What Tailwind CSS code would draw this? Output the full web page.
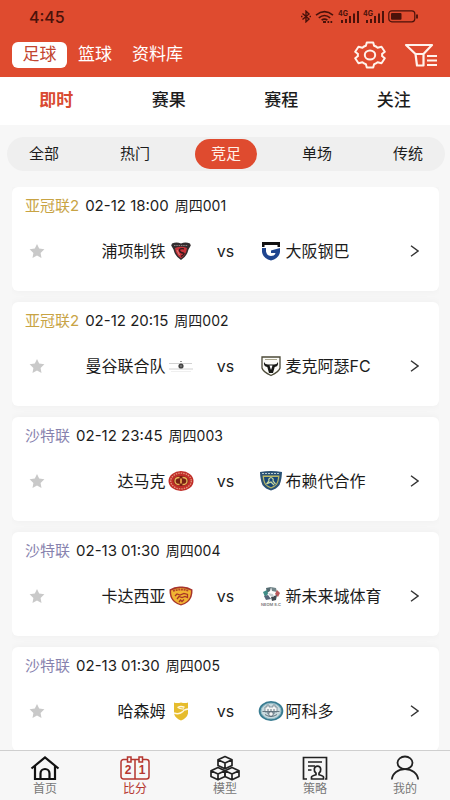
<!DOCTYPE html>
<html lang="zh-CN">
<head>
<meta charset="utf-8">
<meta name="viewport" content="width=device-width, initial-scale=1">
<title>比分</title>
<script src="https://cdn.jsdelivr.net/npm/@tailwindcss/browser@4"></script>
</head>
<body class="flex h-screen flex-col overflow-hidden bg-[#f7f7f7] font-['Inter','Noto_Sans_CJK_SC',sans-serif] text-[#1c1c1c]">

<header class="shrink-0 bg-[#df4b2f]">
  <div class="flex h-[33px] items-center justify-between pr-[31px] pl-[29px] text-[#4a120a]">
    <time class="text-base font-medium">4:45</time>
    <div class="flex items-center gap-1">
      <svg class="h-[13px] w-[10px]" viewBox="0 0 10 13" fill="none" stroke="currentColor" stroke-width="1.4"><path d="M1.5 3.5 8 9 5 11.8V1.2L8 4 1.5 9.5"/><path d="M0 6.5h1.5M8.5 6.5H10"/></svg>
      <svg class="h-[14px] w-[19px]" viewBox="0 0 19 14" fill="none" stroke="currentColor" stroke-width="1.6"><path d="M1 5.2Q9.5-1.8 18 5.2M3.8 7.8q5.7-4.6 11.4 0M6.6 10.2q2.900-2.200 5.800 0"/><path d="M8 12h3M12.5 12h1.7M15.5 12h1.7" stroke-width="2"/></svg>
      <svg class="h-[14px] w-[21px]" viewBox="0 0 21 14" fill="currentColor"><text x="0" y="6" font-size="7" font-weight="700">4G</text><path d="M3 10h2v3H3zM7 9h2v4H7zM11 6h2v7h-2zM15 3.500h2V13h-2zM19 1h2v12h-2z"/></svg>
      <svg class="h-[14px] w-[21px]" viewBox="0 0 21 14" fill="currentColor"><text x="0" y="6" font-size="7" font-weight="700">4G</text><path d="M3 10h2v3H3zM7 9h2v4H7zM11 6h2v7h-2zM15 3.500h2V13h-2zM19 1h2v12h-2z"/></svg>
      <svg class="h-[13px] w-[31px]" viewBox="0 0 31 13"><rect x=".8" y=".8" width="26" height="11" rx="3" fill="none" stroke="currentColor" stroke-width="1.2"/><rect x="3" y="3" width="10.500" height="6.800" rx="1" fill="currentColor"/><path d="M29 4.500v4" stroke="currentColor" stroke-width="1.800"/></svg>
    </div>
  </div>
  <div class="flex h-11 items-center justify-between px-3 text-[17px] text-white">
    <nav class="flex items-center" aria-label="频道">
      <a href="#" aria-current="page" class="flex h-[26px] w-[55px] items-center justify-center rounded-md bg-white text-[#c2452f]">足球</a>
      <a href="#" class="ml-[11px]">篮球</a>
      <a href="#" class="ml-5">资料库</a>
    </nav>
    <div class="flex items-center gap-[18px]">
      <button type="button" aria-label="设置">
        <svg class="h-7 w-8" viewBox="0 0 32 28" fill="none" stroke="#fff3ec" stroke-width="2" stroke-linejoin="round"><path d="M12.800 1.500h6.400l.9 3.300q2 .6 3.500 1.900l3.900-.9 3.300 5-2.800 2.200q.4 1 0 2l2.800 2.200-3.300 5-3.900-.9q-1.500 1.300-3.500 1.900l-.9 3.300h-6.400l-.9-3.300q-2-.6-3.500-1.900l-3.900.9-3.300-5L4 15q-.4-1 0-2L1.200 10.800l3.300-5 3.900.9q1.500-1.300 3.500-1.900z"/><ellipse cx="16" cy="14" rx="5.200" ry="4.600"/></svg>
      </button>
      <button type="button" aria-label="筛选">
        <svg class="h-6 w-[34px]" viewBox="0 0 34 24" fill="none" stroke="#fff3ec" stroke-width="2.200"><path d="M2 2h26L19.500 11v11.500H13L11.500 11z" stroke-linejoin="round"/><path d="M11.500 11h8M23 13h10M23 17.500h10M23 22h10" stroke-width="1.800"/></svg>
      </button>
    </div>
  </div>
</header>

<nav class="grid h-12 shrink-0 grid-cols-4 place-items-center bg-white text-[17px] font-medium" aria-label="赛事">
  <a href="#" aria-current="page" class="font-bold text-[#d94b31]">即时</a>
  <a href="#">赛果</a>
  <a href="#">赛程</a>
  <a href="#">关注</a>
</nav>

<div class="mt-3 mr-[5px] ml-[7px] flex h-[34px] shrink-0 items-center justify-between rounded-full bg-[#efefef] px-1.5 text-[15px]">
  <button type="button" class="h-[30px] w-[62px]">全部</button>
  <button type="button" class="h-[30px] w-[62px]">热门</button>
  <button type="button" aria-pressed="true" class="h-[30px] w-[62px] rounded-full bg-[#df4b2f] text-[#fff0e8]">竞足</button>
  <button type="button" class="h-[30px] w-[62px]">单场</button>
  <button type="button" class="h-[30px] w-[62px]">传统</button>
</div>

<main id="matches" class="mt-4 mr-[11px] ml-3 flex min-h-0 flex-1 flex-col gap-[11px] overflow-y-auto [scrollbar-width:none]"></main>

<nav class="grid h-[50px] shrink-0 grid-cols-5 border-t border-[#cfcfcf] bg-[#f7f7f7] text-xs text-[#777]" aria-label="主导航">
  <a href="#" class="flex flex-col items-center pt-1">
    <svg class="h-[26px] w-[30px]" viewBox="0 0 30 26" fill="none" stroke="#111" stroke-width="2.200"><path d="M1.500 13.500 15 2.500l13.500 11"/><path d="M5 11v13h20V11M10.500 24v-5.500a4.500 4.500 0 0 1 9 0V24"/></svg>
    <span class="leading-4">首页</span>
  </a>
  <a href="#" aria-current="page" class="flex flex-col items-center pt-1 text-[#b5362f]">
    <svg class="h-[26px] w-[30px]" viewBox="0 0 30 26" fill="none" stroke="currentColor" stroke-width="1.500"><path d="M7.500 4.500H3.500A2.500 2.500 0 0 0 1 7v14.500A2.500 2.500 0 0 0 3.500 24h23a2.500 2.500 0 0 0 2.500-2.500V7a2.500 2.500 0 0 0-2.500-2.500h-4M11 4.500h8M15 4.500V24"/><rect x="7.500" y="2" width="3.500" height="5"/><rect x="19" y="2" width="3.500" height="5"/><g fill="currentColor" stroke="none" font-size="12" font-weight="700" text-anchor="middle" font-family="Liberation Sans"><text x="8" y="19">2</text><text x="22" y="19">1</text></g></svg>
    <span class="leading-4">比分</span>
  </a>
  <a href="#" class="flex flex-col items-center pt-1">
    <svg class="h-[26px] w-[30px]" viewBox="0 0 30 26" fill="none" stroke="#222" stroke-width="1.700" stroke-linejoin="round"><path id="cube" d="m15 1.500 7 3.300v5.700L15 13.700l-7-3.200V4.800zM8 4.800l7 3.200 7-3.200M15 8v5.700"/><use href="#cube" x="-7" y="11"/><use href="#cube" x="7" y="11"/></svg>
    <span class="leading-4">模型</span>
  </a>
  <a href="#" class="flex flex-col items-center pt-1">
    <svg class="h-[26px] w-[30px]" viewBox="0 0 30 26" fill="none" stroke="#222" stroke-width="1.700"><path d="M7 24H3.500V2.500h23V24H25M8 7h14M8 11h7M8 15h3.500"/><path d="M11.500 24v-2q0-1 4.500-2.300v-1.500q-2-1.700-1.700-4.200.4-2.800 3.200-2.800t3.200 2.800q.3 2.500-1.700 4.200v1.500q4.500 1.300 4.500 2.300v2z"/></svg>
    <span class="leading-4">策略</span>
  </a>
  <a href="#" class="flex flex-col items-center pt-1">
    <svg class="h-[26px] w-[30px]" viewBox="0 0 30 26" fill="none" stroke="#222" stroke-width="1.800"><ellipse cx="15" cy="7.800" rx="7.500" ry="6.300"/><path d="M1.800 24.500C2.500 18 8 14.200 15 14.200S27.500 18 28.200 24.500"/></svg>
    <span class="leading-4">我的</span>
  </a>
</nav>

<script>
const crest = inner => `<svg class="h-6 w-[26px] shrink-0" viewBox="0 0 26 24" aria-hidden="true">${inner}</svg>`;

const crests = {
  pohang: crest('<path d="M4 4.500q4.500-2 9 0 4.500-2 9 0l.8 2-2.300 4Q19 17.500 13 21 7 17.500 5.500 10.500l-2.300-4z" fill="#332d2f"/><path d="M7 9q6-2.500 12 0-.5 7-6 10.200Q7.500 16 7 9z" fill="#c9333a"/><path d="M16 9.800q-5-.5-4.500 1.700t3.500 2.500-2 3.500" fill="none" stroke="#33191b" stroke-width="1.300"/><path d="M9 11l2.500 5" stroke="#e6a29b" stroke-width=".8"/><path d="M6 6.500h14" stroke="#a49a9a" stroke-width=".8" stroke-dasharray="1.500 .8"/>'),
  gamba: crest('<path d="M4 3h18v5h-2.500V6H6.500v2H4z" fill="#111"/><path d="M4 9h4v3.500q1 4.500 5 4.500t4.500-3H13v-2.500l9-2.500v4q-1 6.500-9 8.500-8-2-9-8.500z" fill="#1f458f"/>'),
  bangkok: crest('<path d="M1 9.500h23M1 15h24" stroke="#d2d2d2"/><path d="M3 17.500h20" stroke="#e8e8e8" stroke-width=".7"/><circle cx="13" cy="12" r="2.600" fill="#444"/><path d="M12 7.500h2M12 12h2" stroke="#999"/>'),
  macarthur: crest('<path d="M4 3h18v11q-1 4-9 7.500Q5 18 4 14z" fill="#fcfcf8" stroke="#4c4a38" stroke-width="1.300"/><path d="M7 5.500h12" stroke="#aaa68e"/><path d="M6 8q1 2.500 4 2.500h6q3 0 4-2.500.7 4.500-3.300 5L15 19h-4l-1.700-6Q5.300 12.500 6 8z" fill="#171815"/><path d="m11.500 11.500 1.500 4.500 1.500-4.500z" fill="#fff"/>'),
  damac: crest('<ellipse cx="13" cy="12" rx="12.500" ry="10" fill="#c02d28"/><ellipse cx="13" cy="12" rx="10.300" ry="7.900" fill="none" stroke="#e3957c" stroke-width="1.300" stroke-dasharray="1.500 1"/><ellipse cx="13" cy="12" rx="7.500" ry="5" fill="#772015"/><path d="M11.500 8.500q-4.500 0-4.500 3.500t4.500 3.500M14.500 8.500q4.500 0 4.500 3.500t-4.500 3.500" fill="none" stroke="#eab45a" stroke-width="1.300"/><path d="M13 9.500v5" stroke="#e5a247" stroke-width="1.800"/>'),
  taawoun: crest('<path d="M2 3q11-2 22 0-.3 8-2.500 13-3 4-8.500 5.500Q7.500 20 4.500 16 2.300 11 2 3z" fill="#2a5275"/><path d="M4.500 6.500h17q-.5 6-2.500 9-2 2.500-6 4-4-1.500-6-4-2-3-2.500-9z" fill="#b9b866"/><path d="M6 8h14q-.5 5.500-2.700 8L13 18.300 8.700 16Q6.500 13.500 6 8z" fill="#174778"/><path d="M4 4.500h18" stroke="#b7cbd0" stroke-dasharray="2 1"/><path d="M13 8.500q3 1 2 3.500l2.500 3M13 8.500q-3 1-2 3.500l-2.500 3 4.500-2 3 3" stroke="#c9d9a0" stroke-width="1.200" fill="none"/>'),
  qadsiah: crest('<path d="M1.500 5.500Q7 2 13 2.500 19 2 24.500 5.500q.5 8-4.500 12.500-3 2.500-7 3.500-4-1-7-3.500Q1 13.500 1.500 5.500z" fill="#a7342b"/><path d="M3 6.500Q13 1.500 23 6.500q0 7-3.800 10.500-2.700 2.300-6.200 3.200-3.500-.9-6.200-3.200Q3 13.500 3 6.500z" fill="#f1b332"/><path d="M5 7q8-3 16 0" stroke="#b4472b" stroke-width="1.800" stroke-dasharray="2 .7" fill="none"/><path d="m7 12 2-2 3 1 4-1.500 3.500 1v3l-2.500-1-3 1-3-1-2 2.500M11 18l1.500-2 1.500 1.500 2-2" fill="none" stroke="#a93526" stroke-width="1.300"/>'),
  neom: crest('<path d="m8 4 5-1-1 4-3 2z" fill="#536a70"/><path d="m13 3 5 1 1 4-5-1z" fill="#73868a"/><path d="m19 6 3 3-2 4-3-3z" fill="#b9585c"/><path d="m5 8 4-2 1 4-3 3z" fill="#3f8d87"/><path d="m6 12 4-1 3 4-5 1z" fill="#56667a"/><path d="m13 13 6-2-1 5-4 1z" fill="#424a52"/><path d="m10 9 5 1 1 3-4-1z" fill="#c5cace"/><text x="13" y="21.500" font-size="4" font-weight="600" text-anchor="middle" fill="#777">NEOM S.C</text>'),
  hazem: crest('<path d="M6 3.500q3 1 7 0 4 1 7 0v11q-1 4.500-7 7-6-2.500-7-7z" fill="#e6bc2c"/><path d="M16.500 8.200Q12.500 7 10 8.300M6 14q3.500 1.500 6.500 0t3-2.200T20 10" fill="none" stroke="#fff8e0" stroke-width="1.500"/><path d="M9.500 8.300q3 2.200 6.500 1.500" fill="none" stroke="#fff8e0" stroke-width="1.100"/>'),
  okhdood: crest('<ellipse cx="13" cy="12" rx="12.300" ry="10" fill="#397c91"/><ellipse cx="13" cy="12" rx="10" ry="7.800" fill="#c9dade" stroke="#94bdc8"/><path d="M7 8h2V6h2v2h4V6h2v2h2v5H7z" fill="#f3f4f3" stroke="#657a88" stroke-width=".7"/><path d="M4.500 12.500h17M7 15.500q6 4 12 0M10 10v5M13 10v5M16 10v5" stroke="#657681" fill="none"/><circle cx="13" cy="15" r="2.300" fill="#f4f4f4" stroke="#495c69" stroke-width=".8"/>')
};

const GOLD = 'text-[#c8a344]', PURPLE = 'text-[#8782ae]';
const matches = [
  ['亚冠联2', GOLD, '02-12 18:00', '周四001', '浦项制铁', 'pohang', '大阪钢巴', 'gamba'],
  ['亚冠联2', GOLD, '02-12 20:15', '周四002', '曼谷联合队', 'bangkok', '麦克阿瑟FC', 'macarthur'],
  ['沙特联', PURPLE, '02-12 23:45', '周四003', '达马克', 'damac', '布赖代合作', 'taawoun'],
  ['沙特联', PURPLE, '02-13 01:30', '周四004', '卡达西亚', 'qadsiah', '新未来城体育', 'neom'],
  ['沙特联', PURPLE, '02-13 01:30', '周四005', '哈森姆', 'hazem', '阿科多', 'okhdood']
];

document.getElementById('matches').innerHTML = matches.map(([league, color, date, code, home, homeCrest, away, awayCrest]) => `
  <article class="shrink-0 rounded-md bg-white px-[13px] pt-[9px] pb-5 shadow-[0_0_8px_#0000000a]">
    <div class="flex h-5 items-center gap-[6px] text-[15px]">
      <span class="${color}">${league}</span>
      <time>${date}</time>
      <span class="text-sm">${code}</span>
    </div>
    <div class="mt-[15px] grid h-10 grid-cols-[1fr_64px_1fr] items-center text-base">
      <div class="flex items-center justify-between">
        <button type="button" aria-label="收藏" class="ml-1">
          <svg class="size-4" viewBox="0 0 16 16" fill="#c9c9c9"><path d="m8 1 2.200 4.600 5.200.7-3.800 3.600.9 5.100L8 12.600 3.500 15l.9-5.100L.6 6.300l5.200-.7z"/></svg>
        </button>
        <span class="flex items-center gap-[2px]">${home}${crests[homeCrest]}</span>
      </div>
      <span class="text-center">vs</span>
      <div class="flex items-center justify-between">
        <span class="flex items-center gap-[2px]">${crests[awayCrest]}${away}</span>
        <button type="button" aria-label="详情" class="mr-[7px]">
          <svg class="h-3 w-[9px]" viewBox="0 0 9 12" fill="none" stroke="#333" stroke-width="1.400"><path d="m1 .8 7 5.200-7 5.200"/></svg>
        </button>
      </div>
    </div>
  </article>`).join('');
</script>
</body>
</html>
